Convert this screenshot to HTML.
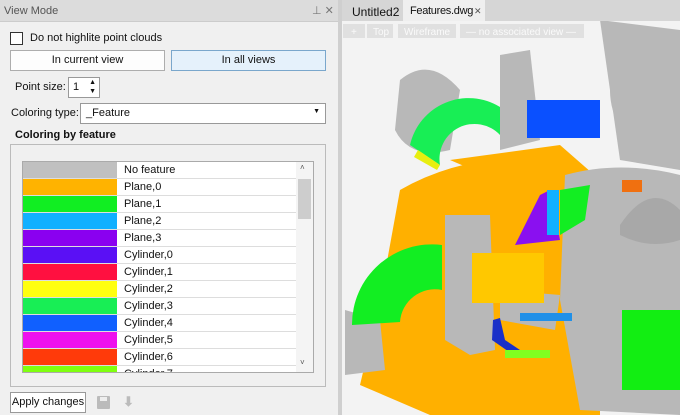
<!DOCTYPE html><html><head><style>
*{margin:0;padding:0;box-sizing:border-box}
body{width:680px;height:415px;overflow:hidden;background:#f0f0f0;font-family:"Liberation Sans",sans-serif;font-size:11px;color:#111;position:relative;white-space:nowrap}
.a{position:absolute}
.btn{position:absolute;border:1px solid #adadad;background:#fdfdfd;text-align:center;line-height:19px}
.row{position:absolute;left:23px;width:273px;height:17px;border-bottom:1px solid #ddd;background:#fff}
.row i{position:absolute;left:0;top:0;width:94px;height:16px}
.row span{position:absolute;left:101px;top:1px;line-height:15px}
</style></head><body>
<div class="a" style="left:0;top:0;width:338px;height:22px;background:#dcdcdc;border-bottom:1px solid #ccc"></div>
<div class="a" style="left:4px;top:5px;color:#555">View Mode</div>
<div class="a" style="left:312px;top:4px;color:#777;font-size:11px">⊥ ✕</div>
<div class="a" style="left:10px;top:32px;width:13px;height:13px;border:1px solid #333;background:#fff"></div>
<div class="a" style="left:30px;top:32px">Do not highlite point clouds</div>
<div class="btn" style="left:10px;top:50px;width:155px;height:21px">In current view</div>
<div class="btn" style="left:171px;top:50px;width:155px;height:21px;background:#e5f1fb;border-color:#7aa7cc">In all views</div>
<div class="a" style="left:15px;top:81px">Point size:</div>
<div class="a" style="left:68px;top:77px;width:32px;height:21px;border:1px solid #999;background:#fff;padding:3px 4px">1<span style="position:absolute;right:3px;top:0;font-size:7px;line-height:9px">▲<br>▼</span></div>
<div class="a" style="left:11px;top:107px">Coloring type:</div>
<div class="a" style="left:80px;top:103px;width:246px;height:21px;border:1px solid #999;background:#fff;padding:3px 5px">_Feature<span style="position:absolute;right:5px;top:4px;font-size:7px">▼</span></div>
<div class="a" style="left:15px;top:129px;font-weight:bold">Coloring by feature</div>
<div class="a" style="left:10px;top:144px;width:316px;height:243px;border:1px solid #bbb"></div>
<div class="a" style="left:22px;top:161px;width:292px;height:212px;border:1px solid #aaa;background:#fff"></div>
<div class="a" style="left:23px;top:162px;width:273px;height:210px;overflow:hidden">
<div style="position:relative;left:-23px;top:-162px">
<div class="row" style="top:162px"><i style="background:#c0c0c0"></i><span>No feature</span></div>
<div class="row" style="top:179px"><i style="background:#ffb300"></i><span>Plane,0</span></div>
<div class="row" style="top:196px"><i style="background:#11ee22"></i><span>Plane,1</span></div>
<div class="row" style="top:213px"><i style="background:#11b0ff"></i><span>Plane,2</span></div>
<div class="row" style="top:230px"><i style="background:#8a00f0"></i><span>Plane,3</span></div>
<div class="row" style="top:247px"><i style="background:#5a10f5"></i><span>Cylinder,0</span></div>
<div class="row" style="top:264px"><i style="background:#ff1040"></i><span>Cylinder,1</span></div>
<div class="row" style="top:281px"><i style="background:#ffff10"></i><span>Cylinder,2</span></div>
<div class="row" style="top:298px"><i style="background:#18ee55"></i><span>Cylinder,3</span></div>
<div class="row" style="top:315px"><i style="background:#1060ff"></i><span>Cylinder,4</span></div>
<div class="row" style="top:332px"><i style="background:#ee10ee"></i><span>Cylinder,5</span></div>
<div class="row" style="top:349px"><i style="background:#ff3a0a"></i><span>Cylinder,6</span></div>
<div class="row" style="top:366px"><i style="background:#80ff10"></i><span>Cylinder,7</span></div>
</div></div>
<div class="a" style="left:296px;top:162px;width:17px;height:210px;background:#f4f4f4"></div>
<div class="a" style="left:298px;top:179px;width:13px;height:40px;background:#cdcdcd"></div>
<div class="a" style="left:300px;top:163px;font-size:8px;color:#555">˄</div>
<div class="a" style="left:300px;top:358px;font-size:8px;color:#555">˅</div>
<div class="btn" style="left:10px;top:392px;width:76px;height:21px;line-height:19px;border-color:#999;background:#fff">Apply changes</div>
<div class="a" style="left:97px;top:396px;width:13px;height:13px;background:#bbb;border-radius:1px"><div style="margin:1px 3px;width:7px;height:4px;background:#eee"></div></div>
<div class="a" style="left:123px;top:394px;color:#bbb;font-size:13px;font-weight:bold">⬇</div>
<div class="a" style="left:338px;top:0;width:4px;height:415px;background:#cfcfcf"></div>
<div class="a" style="left:342px;top:0;width:338px;height:21px;background:#d6d6d6"></div>
<div class="a" style="left:352px;top:5px;font-size:12px">Untitled2</div>
<div class="a" style="left:403px;top:0;width:82px;height:21px;background:#efefef"></div>
<div class="a" style="left:410px;top:5px;font-size:11px;letter-spacing:-0.3px">Features.dwg</div>
<div class="a" style="left:474px;top:6px;font-size:9px;color:#555">✕</div>
<svg class="a" style="left:342px;top:21px" width="338" height="394" viewBox="342 21 338 394">
<rect x="342" y="21" width="338" height="394" fill="#f3f3f3"/>
<g fill="#e0e0e0"><rect x="343" y="24" width="22" height="14"/><rect x="367" y="24" width="26" height="14"/><rect x="398" y="24" width="58" height="14"/><rect x="460" y="24" width="124" height="14"/></g>
<g fill="#fafafa" font-size="10" font-family="Liberation Sans"><text x="351" y="35">+</text><text x="373" y="35">Top</text><text x="404" y="35">Wireframe</text><text x="466" y="35">— no associated view —</text></g>
<path d="M400 190 Q470 150 560 160 L580 230 L600 300 L600 415 L430 415 L360 385 L380 300 Z" fill="#ffb000"/>
<path d="M450 160 L560 145 L600 180 L520 190 Z" fill="#ffb000"/>
<g fill="#b8b8b8"><path d="M400 80 Q430 55 460 90 L450 150 Q410 160 395 130 Z"/><path d="M500 55 L530 50 L540 140 L500 150 Z"/><path d="M600 20 L680 30 L680 170 L620 160 Z"/><ellipse cx="650" cy="90" rx="40" ry="55"/><path d="M445 215 L490 215 L495 350 L470 355 L445 340 Z"/><path d="M565 175 Q620 160 680 175 L680 415 L580 410 L560 300 Z"/><path d="M345 310 L380 320 L385 370 L345 375 Z"/><path d="M500 290 L560 295 L555 330 L500 320 Z"/></g>
<path d="M352 325 A80 80 0 0 1 442 245 L442 290 A35 35 0 0 0 400 322 Z" fill="#12ee22"/>
<path d="M410 145 A60 60 0 0 1 500 107 L500 135 A35 35 0 0 0 440 165 Z" fill="#18ee55"/>
<path d="M418 150 L440 165 L437 170 L414 157 Z" fill="#e8ee10"/>
<rect x="527" y="100" width="73" height="38" fill="#0a50ff"/>
<path d="M515 245 L540 195 L550 190 L560 240 Z" fill="#8a10f0"/>
<rect x="547" y="190" width="12" height="45" fill="#11b0ff"/>
<path d="M560 190 L590 185 L585 220 L560 235 Z" fill="#12ee22"/>
<rect x="472" y="253" width="72" height="50" fill="#ffc800"/>
<rect x="520" y="313" width="52" height="8" fill="#2090e8"/>
<path d="M493 320 L500 318 L505 340 L520 350 L540 352 L540 358 L515 356 L492 340 Z" fill="#1a30c8"/>
<rect x="505" y="350" width="45" height="8" fill="#80ff20"/>
<rect x="622" y="310" width="58" height="80" fill="#12ee12"/>
<path d="M620 225 Q650 180 680 210 L680 240 Q650 250 620 235 Z" fill="#a8a8a8"/>
<rect x="622" y="180" width="20" height="12" fill="#f07010"/>
</svg>
</body></html>
